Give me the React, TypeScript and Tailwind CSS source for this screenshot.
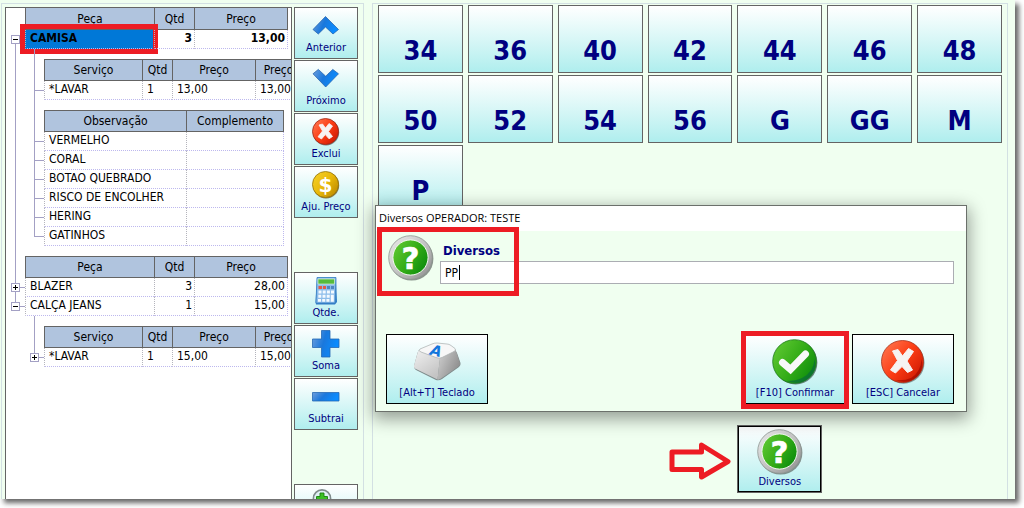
import { ReactNode } from "react";
import clsx from "clsx";

const ui = "font-['DejaVu_Sans_Condensed','DejaVu_Sans',sans-serif]";

type Column = { title: string; width: string; align?: string };
type Row = { cells: string[]; node?: "open" | "closed"; selected?: boolean };

const pieceColumns: Column[] = [
  { title: "Peça", width: "w-[129px]" },
  { title: "Qtd", width: "w-[40px]", align: "text-right" },
  { title: "Preço", width: "w-[94px]", align: "text-right" },
];

const serviceColumns: Column[] = [
  { title: "Serviço", width: "w-[98px]" },
  { title: "Qtd", width: "w-[30px]" },
  { title: "Preço", width: "w-[83px]" },
  { title: "Preço", width: "w-[47px]" },
];

const noteColumns: Column[] = [
  { title: "Observação", width: "w-[142px]" },
  { title: "Complemento", width: "w-[98px]" },
];

const notes = ["VERMELHO", "CORAL", "BOTAO QUEBRADO", "RISCO DE ENCOLHER", "HERING", "GATINHOS"];

const sizes = ["34", "36", "40", "42", "44", "46", "48", "50", "52", "54", "56", "G", "GG", "M", "P"];

const Gradients = () => (
  <svg width="0" height="0" className="absolute" aria-hidden="true">
    <defs>
      <linearGradient id="blue" x1="0" y1="0" x2="1" y2="0.3">
        <stop offset="0" stopColor="#6f9fdc" />
        <stop offset="0.5" stopColor="#1a78dc" />
        <stop offset="1" stopColor="#0a8cff" />
      </linearGradient>
      <linearGradient id="green" x1="0" y1="0.2" x2="1" y2="0.8">
        <stop offset="0" stopColor="#5fc832" />
        <stop offset="0.5" stopColor="#35ad18" />
        <stop offset="1" stopColor="#0a8a0c" />
      </linearGradient>
      <linearGradient id="red" x1="0" y1="0.1" x2="1" y2="0.9">
        <stop offset="0" stopColor="#ff7850" />
        <stop offset="0.5" stopColor="#fb3c14" />
        <stop offset="1" stopColor="#c81400" />
      </linearGradient>
      <linearGradient id="gold" x1="0" y1="0.1" x2="1" y2="0.9">
        <stop offset="0" stopColor="#f5d028" />
        <stop offset="0.5" stopColor="#e8b80a" />
        <stop offset="1" stopColor="#b98600" />
      </linearGradient>
      <linearGradient id="silver" x1="0" y1="0" x2="1" y2="1">
        <stop offset="0" stopColor="#ededed" />
        <stop offset="0.5" stopColor="#c4c4c4" />
        <stop offset="1" stopColor="#8a8a8a" />
      </linearGradient>
      <linearGradient id="keyLeft" x1="0" y1="0" x2="0.6" y2="1">
        <stop offset="0" stopColor="#f2f2f2" />
        <stop offset="1" stopColor="#c4c4c4" />
      </linearGradient>
      <linearGradient id="keyRight" x1="0" y1="0" x2="1" y2="0.6">
        <stop offset="0" stopColor="#d4d4d4" />
        <stop offset="1" stopColor="#8c8c8c" />
      </linearGradient>
    </defs>
  </svg>
);

const SmallIcon = ({ children }: { children: ReactNode }) => (
  <svg width="28" height="28" viewBox="0 0 28 28" className="shrink-0" aria-hidden="true">
    {children}
  </svg>
);

const UpIcon = () => (
  <SmallIcon>
    <path d="M13.5 4.5 26.5 17.5 21 22 13.5 15 6.3 22 1 17.5Z" fill="url(#blue)" stroke="#1c5ca8" strokeWidth=".7" />
  </SmallIcon>
);

const DownIcon = () => (
  <SmallIcon>
    <path d="M13.7 22 1 8.8 6.3 4.4 13.7 11.2 20.8 4.4 26.5 8.8Z" fill="url(#blue)" stroke="#1c5ca8" strokeWidth=".7" />
  </SmallIcon>
);

const DeleteIcon = () => (
  <SmallIcon>
    <circle cx="14" cy="14.2" r="13.2" fill="#6d7f80" />
    <circle cx="13.5" cy="13.5" r="13" fill="url(#red)" stroke="#a02818" strokeWidth=".8" />
    <path
      d="M7 7 10.5 6 13.5 10 17 5.5 20.5 8 16.5 13.5 20.5 18.500 17 20.800 13.300 16.600 9.500 21 6 18.800 10.500 13Z"
      fill="#f7f3f2"
      stroke="#f7f3f2"
      strokeWidth=".8"
      strokeLinejoin="round"
    />
  </SmallIcon>
);

const CoinIcon = () => (
  <SmallIcon>
    <circle cx="14" cy="14.2" r="13.2" fill="#857a50" />
    <circle cx="13.5" cy="13.5" r="13" fill="url(#gold)" stroke="#94740c" strokeWidth=".8" />
    <text x="13.5" y="20.5" textAnchor="middle" fontSize="20" fontWeight="bold" fontFamily="DejaVu Sans" fill="#fff">$</text>
  </SmallIcon>
);

const CalculatorIcon = () => (
  <SmallIcon>
    <path d="M5 .5H24L25 25 23 27.5H4L3.5 25Z" fill="#2f7cc6" />
    <path d="M5 .5H24L23 26H4Z" fill="#8dbdea" stroke="#3a82c4" strokeWidth=".8" />
    <path d="M6 2H22.5V7H6Z" fill="#55bb3c" stroke="#d6f2d0" strokeWidth=".7" />
    <path d="M6.5 9H10V12H6.5ZM11 9H14V12H11Z" fill="#e35a48" />
    <path d="M15 9H18V12H15ZM19 9H22V12H19Z" fill="#4e86c0" />
    <path d="M6.5 13.5H9.5V16.5H6.5ZM10.7 13.5H13.7V16.5H10.7ZM14.9 13.5H17.9V16.5H14.9ZM6.3 17.7H9.3V20.7H6.3ZM10.5 17.7H13.5V20.7H10.5ZM14.7 17.7H17.7V20.7H14.7ZM6 22H9V24.7H6ZM10.2 22H13.2V24.7H10.2ZM14.4 22H17.4V24.7H14.4ZM19 13.5H22V16.5H19ZM18.8 17.7H21.8V24.7H18.8Z" fill="#f4faff" />
  </SmallIcon>
);

const PlusIcon = () => (
  <SmallIcon>
    <path d="M9.5 .5H18V9H27V17.5H18V27H9.5V17.5H.5V9H9.5Z" fill="url(#blue)" stroke="#2468b4" strokeWidth=".8" />
  </SmallIcon>
);

const MinusIcon = () => (
  <SmallIcon>
    <path d="M.5 9.5H27V18H.5Z" fill="url(#blue)" stroke="#2468b4" strokeWidth=".8" />
  </SmallIcon>
);

const ZoomInIcon = () => (
  <SmallIcon>
    <path d="M16 16 25 25" stroke="#777" strokeWidth="4" strokeLinecap="round" />
    <circle cx="10" cy="9.5" r="8.6" fill="#dff0f4" stroke="#7f8b8b" strokeWidth="1.6" />
    <path d="M8 4H12V7.5H15.5V11.5H12V15H8V11.5H4.5V7.5H8Z" fill="#3bbf24" stroke="#16800c" strokeWidth=".9" />
  </SmallIcon>
);

const QuestionIcon = () => (
  <svg width="46" height="46" viewBox="0 0 46 46" className="shrink-0" aria-hidden="true">
    <circle cx="23.6" cy="23.8" r="21.8" fill="#5f6763" opacity=".7" />
    <circle cx="22.5" cy="22.5" r="21.8" fill="url(#silver)" stroke="#8d9490" strokeWidth=".8" />
    <circle cx="22.5" cy="22.5" r="17.6" fill="url(#green)" stroke="#f3fbf1" strokeWidth="1" />
    <text x="22.5" y="34" textAnchor="middle" fontSize="31" fontWeight="bold" fontFamily="DejaVu Sans" fill="#fff" stroke="#fff" strokeWidth=".6">?</text>
  </svg>
);

const ConfirmIcon = () => (
  <svg width="46" height="46" viewBox="0 0 46 46" className="shrink-0" aria-hidden="true">
    <circle cx="23.6" cy="23.6" r="21.8" fill="#47655c" opacity=".8" />
    <circle cx="22.5" cy="22.5" r="21.8" fill="url(#green)" stroke="#1c7a1c" strokeWidth=".8" />
    <path d="M30 39Q42 33 42.5 20Q46 36 30 43Q22 45 15 42Q24 42 30 39Z" fill="#0a6b3c" opacity=".7" />
    <path d="M10.5 23.5 18.5 30.5 33.5 15" fill="none" stroke="#f8f8f8" strokeWidth="7" strokeLinecap="round" />
  </svg>
);

const CancelIcon = () => (
  <svg width="46" height="46" viewBox="0 0 46 46" className="shrink-0" aria-hidden="true">
    <circle cx="23.5" cy="23.7" r="21" fill="#5f6c6c" opacity=".7" />
    <circle cx="22.5" cy="22.5" r="21" fill="url(#red)" stroke="#a83018" strokeWidth=".8" />
    <path d="M31 39Q41 33 41.5 20Q45 36 30 42Q22 44 15 41Q24 42 31 39Z" fill="#a00c00" opacity=".7" />
    <path d="M12.5 12 18 10.5 22.5 17 28.5 9.5 33.500 12.5 27 22 32.5 31 27.500 33.500 22 27.5 15.5 34 10.5 31 17.5 21.5Z" fill="#f6f3f2" stroke="#f6f3f2" strokeWidth="1" strokeLinejoin="round" />
  </svg>
);

const KeyIcon = () => (
  <svg width="48" height="46" viewBox="0 0 48 46" className="shrink-0" aria-hidden="true">
    <path d="M8 10Q5 11 4.500 14L1 27Q1 30 4 31.500L23 41Q26 42 29 40L46 28Q48 26 47.500 24L44 14Q43 11 40 9Z" fill="#7e8b8b" />
    <path d="M7 10 27 19 24.500 40.500 3 30Q.5 29 1 26.500L5 12.500Z" fill="url(#keyLeft)" />
    <path d="M27 18 42.500 10.500 47 24Q47.500 26 45.500 27.500L28 39.500Q26 41 24.500 40.500Z" fill="url(#keyRight)" />
    <path d="M7 10 19 5Q21 4 24 4L34 5Q36 5 38 6.500L42 9.500Q43.500 11 41 12.500L29 18.500Q26 20 23 18.500L8 13Q4.500 11.500 7 10Z" fill="#f7f7f7" stroke="#a7adad" strokeWidth=".7" />
    <text x="23" y="17" textAnchor="middle" fontSize="15" fontWeight="bold" fontStyle="italic" fontFamily="DejaVu Sans" fill="#1276dc" transform="rotate(14 23 12)">A</text>
  </svg>
);

const Gutter = ({ node }: { node?: "open" | "closed" }) => (
  <td className="p-0">
    <div className="flex items-center">
      {node ? (
        <button
          type="button"
          aria-label={node === "open" ? "Recolher" : "Expandir"}
          className="relative ml-[5px] flex size-[9px] shrink-0 items-center justify-center border border-[#a3a0c4] bg-white"
        >
          <svg width="7" height="7" viewBox="0 0 7 7" className="shrink-0" aria-hidden="true">
            <path d={node === "open" ? "M1 3.5H6" : "M1 3.5H6M3.5 1V6"} stroke="#000" />
          </svg>
        </button>
      ) : (
        <span className="ml-[9px]" />
      )}
      <span className="h-px flex-1 bg-[#a3a0c4]" />
    </div>
  </td>
);

const Grid = ({ columns, rows, first }: { columns: Column[]; rows: Row[]; first?: boolean }) => (
  <table className="relative w-px table-fixed border-separate border-spacing-0 text-[12px] leading-[16px] text-black">
    <colgroup>
      <col className="w-[19px]" />
      {columns.map((column, i) => (
        <col key={i} className={column.width} />
      ))}
    </colgroup>
    <thead>
      <tr className="h-[22px]">
        <td className="p-0" />
        {columns.map((column, i) => (
          <th
            key={i}
            className={clsx(
              "border-b border-l border-[#646464] bg-[#b0c4de] p-0 text-center font-normal last:border-r",
              !first && "border-t"
            )}
          >
            {column.title}
          </th>
        ))}
      </tr>
    </thead>
    <tbody>
      {rows.map((row, i) => (
        <tr key={i} className={clsx("h-[19px]", row.selected && "font-bold")}>
          <Gutter node={row.node} />
          {row.cells.map((cell, j) => (
            <td
              key={j}
              className={clsx(
                "relative border-b border-l border-dotted border-b-[#bdb8ee] border-l-[#b4b4bc] pt-0 pr-0.5 pb-0.5 pl-1 whitespace-nowrap last:border-r last:border-r-[#bdb8ee]",
                columns[j].align,
                row.selected && j === 0 && "bg-[#0078d7]"
              )}
            >
              {cell}
              {row.selected && j === 0 && (
                <span className="absolute -top-1.5 -right-1 -bottom-1.5 -left-1.5 border-[5px] border-[#ed1c24]" />
              )}
            </td>
          ))}
        </tr>
      ))}
    </tbody>
  </table>
);

const Branch = ({ children }: { children: ReactNode }) => (
  <div className="relative flex flex-col gap-2.5">
    <span className="absolute top-0 bottom-[9px] left-[9px] w-px bg-[#a3a0c4]" />
    {children}
  </div>
);

const SideButton = ({ icon, label }: { icon: ReactNode; label: string }) => (
  <button
    type="button"
    className="flex h-[52px] w-full shrink-0 flex-col items-center gap-px border border-[#646464] bg-linear-to-b from-white to-[#afeeee] pt-1 text-[11px] leading-[14px] text-[#000080]"
  >
    {icon}
    <span>{label}</span>
  </button>
);

const DialogButton = ({ icon, label, marked }: { icon: ReactNode; label: string; marked?: boolean }) => (
  <button
    type="button"
    className="relative flex h-[70px] w-[102px] flex-col items-center gap-px border border-black bg-linear-to-b from-white to-[#afeeee] pt-1 text-[11px] leading-[14px] whitespace-nowrap text-[#000080]"
  >
    {icon}
    <span>{label}</span>
    {marked && <span className="absolute -inset-1 -bottom-1.5 border-[5px] border-[#ed1c24]" />}
  </button>
);

const PieceTree = () => (
  <div className="min-w-0 flex-1 overflow-hidden border border-b-0 border-[#646464] bg-white">
    <div className="relative">
      <span className="absolute top-[31px] bottom-[9px] left-[9px] w-px bg-[#a3a0c4]" />
      <Grid first columns={pieceColumns} rows={[{ cells: ["CAMISA", "3", "13,00"], node: "open", selected: true }]} />
      <div className="pb-2.5 pl-[19px]">
        <Branch>
          <div className="pt-2.5">
            <Grid columns={serviceColumns} rows={[{ cells: ["*LAVAR", "1", "13,00", "13,00"] }]} />
          </div>
          <Grid columns={noteColumns} rows={notes.map((note) => ({ cells: [note, ""] }))} />
        </Branch>
      </div>
      <Grid
        columns={pieceColumns}
        rows={[
          { cells: ["BLAZER", "3", "28,00"], node: "closed" },
          { cells: ["CALÇA JEANS", "1", "15,00"], node: "open" },
        ]}
      />
    </div>
    <div className="pl-[19px]">
      <Branch>
        <div className="pt-2.5">
          <Grid columns={serviceColumns} rows={[{ cells: ["*LAVAR", "1", "15,00", "15,00"], node: "closed" }]} />
        </div>
      </Branch>
    </div>
  </div>
);

const Dialog = () => (
  <div
    role="dialog"
    aria-labelledby="dialog-title"
    className="absolute top-[205px] left-[375px] w-[592px] border border-[#6b706b] bg-[#f0fff0] shadow-[0_5px_16px_2px_rgba(0,0,0,0.38)]"
  >
    <h2 id="dialog-title" className="h-[25px] bg-white px-[3px] font-['Open_Sans','Noto_Sans',sans-serif] text-[11px] leading-6 text-black">
      Diversos OPERADOR: TESTE
    </h2>
    <div className="px-3 pt-1">
      <div className="relative flex items-start gap-1.5">
        <QuestionIcon />
        <div className="flex-1 pt-2">
          <label htmlFor="diversos" className="block pl-[3px] text-[13px] leading-4 font-bold text-[#000080]">
            Diversos
          </label>
          <div className="relative pt-0.5">
            <input
              id="diversos"
              type="text"
              defaultValue="PP"
              className="block h-[23px] w-full border border-[#abadb3] bg-white px-1 text-[12px] text-black outline-none"
            />
            <span className="absolute top-1.5 left-[19px] h-[15px] w-px bg-black" />
          </div>
        </div>
        <span className="absolute -top-2 -left-[11px] h-[69px] w-[142px] border-[5px] border-[#ed1c24]" />
      </div>
    </div>
    <div className="flex gap-1.5 pt-[50px] pr-3 pb-[7px] pl-2.5">
      <div className="flex-1">
        <DialogButton icon={<KeyIcon />} label="[Alt+T] Teclado" />
      </div>
      <DialogButton icon={<ConfirmIcon />} label="[F10] Confirmar" marked />
      <DialogButton icon={<CancelIcon />} label="[ESC] Cancelar" />
    </div>
  </div>
);

const App = () => {
  return (
    <div className={clsx("h-screen overflow-hidden bg-white pr-[9px] pb-[9px]", ui)}>
      <Gradients />
      <div className="relative h-full shadow-[4px_4px_5px_rgba(0,0,0,0.6)]">
        <main className="relative flex h-full gap-2 overflow-hidden bg-[#f0fff0] pt-[3px] pr-[7px] pl-px">
          <section className="flex w-[363px] shrink-0 gap-0.5 overflow-hidden border border-b-0 border-[#d3e0e3] pt-[3px] pr-[5px] pl-[3px]">
            <PieceTree />
            <div className="flex w-16 shrink-0 flex-col gap-[54px]">
              <div className="flex flex-col gap-px">
                <SideButton icon={<UpIcon />} label="Anterior" />
                <SideButton icon={<DownIcon />} label="Próximo" />
                <SideButton icon={<DeleteIcon />} label="Exclui" />
                <SideButton icon={<CoinIcon />} label="Aju. Preço" />
              </div>
              <div className="flex flex-col gap-px">
                <SideButton icon={<CalculatorIcon />} label="Qtde." />
                <SideButton icon={<PlusIcon />} label="Soma" />
                <SideButton icon={<MinusIcon />} label="Subtrai" />
              </div>
              <SideButton icon={<ZoomInIcon />} label="" />
            </div>
          </section>

          <section className="grid min-w-0 flex-1 auto-rows-[68px] grid-cols-7 gap-x-[5px] gap-y-0.5 border border-b-0 border-[#d3e0e3] px-[5px] pt-px">
            {sizes.map((size) => (
              <button
                key={size}
                type="button"
                className="flex items-end justify-center border border-[#646464] bg-linear-to-b from-white to-[#afeeee] pb-[5px] text-[27px] leading-8 font-bold text-[#000080]"
              >
                {size}
              </button>
            ))}
            <div className="col-start-4 row-start-7 flex items-center justify-end pt-1">
              <svg width="64" height="40" viewBox="0 0 64 40" aria-hidden="true">
                <path d="M4 11H33.500V4L60 20.500 33.500 36V28.500H4Z" fill="none" stroke="#ed1c24" strokeWidth="5" strokeLinejoin="round" />
              </svg>
            </div>
            <button
              type="button"
              className="col-start-5 row-start-7 flex flex-col items-center border border-[#646464] bg-linear-to-b from-white to-[#afeeee] pt-[3px] text-[11px] leading-[14px] text-[#000080] inset-ring inset-ring-black"
            >
              <QuestionIcon />
              <span>Diversos</span>
            </button>
          </section>
        </main>
        <Dialog />
      </div>
    </div>
  );
};

export default App;
